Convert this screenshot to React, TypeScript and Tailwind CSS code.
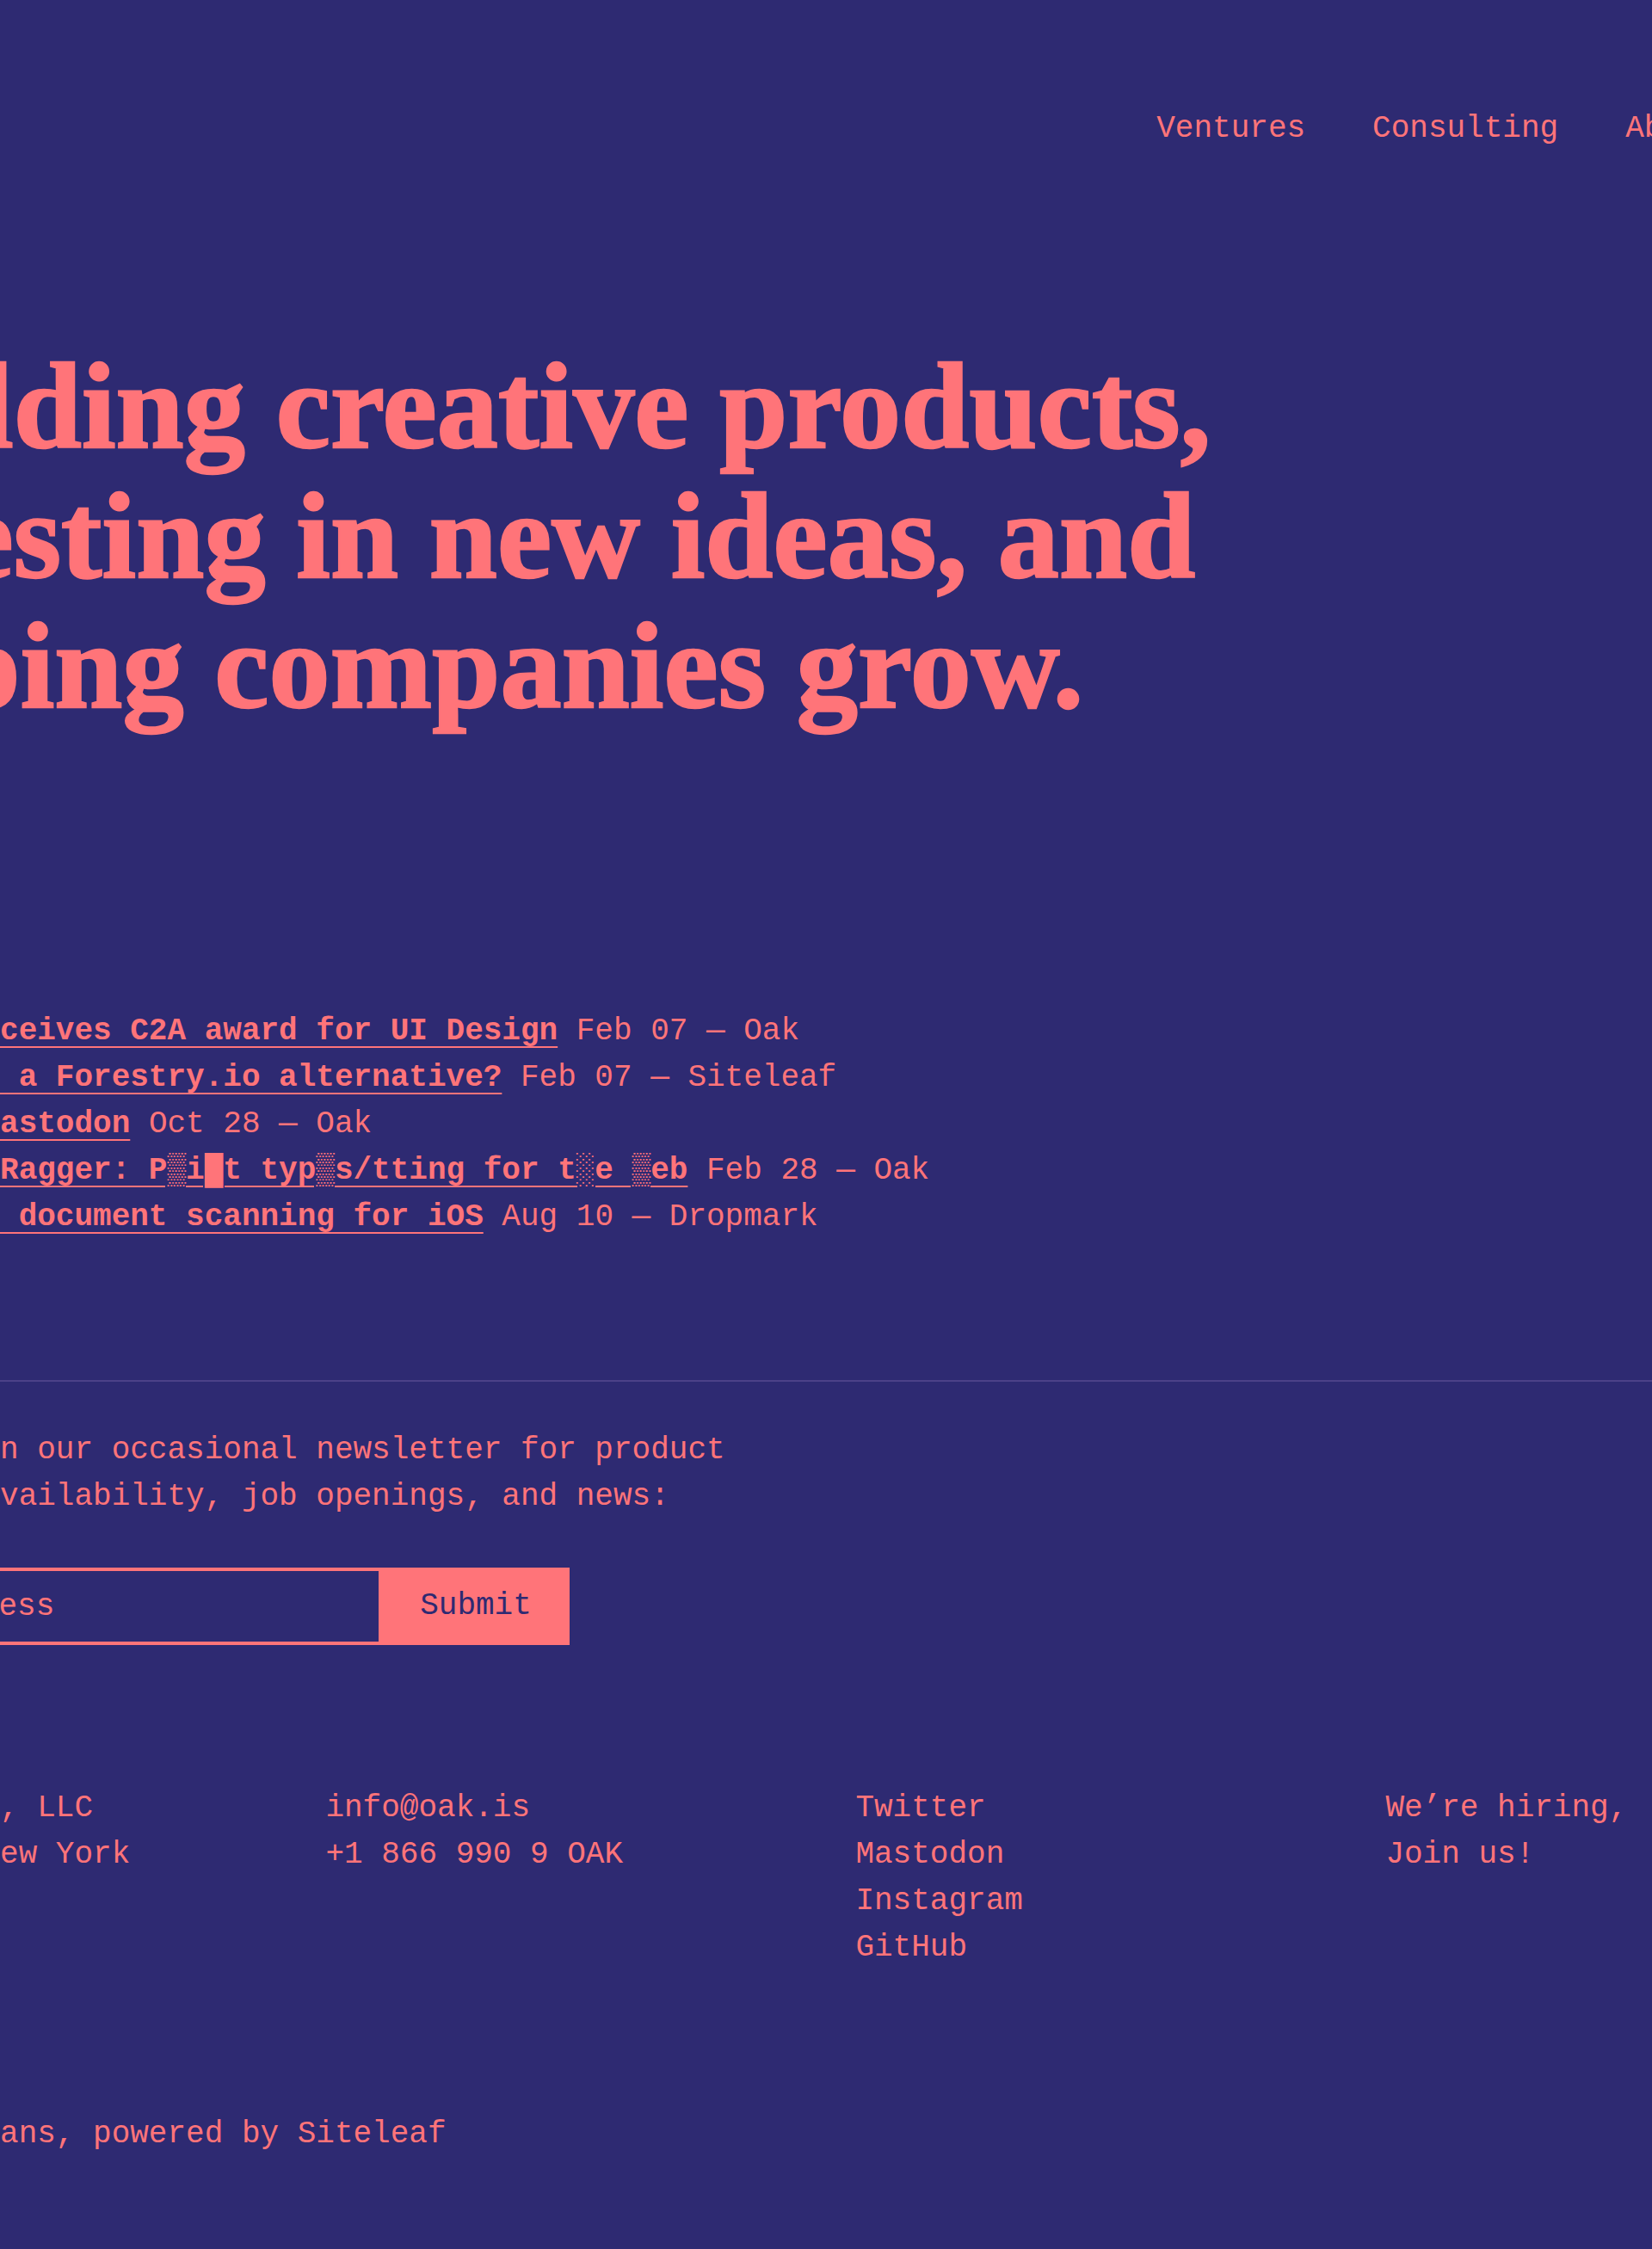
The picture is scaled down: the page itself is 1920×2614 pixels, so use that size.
import React from "react";

const news = [
    { title: "Dropmark receives C2A award for UI Design", meta: "Feb 07 — Oak" },
    { title: "Looking for a Forestry.io alternative?", meta: "Feb 07 — Siteleaf" },
    { title: "Oak is on Mastodon", meta: "Oct 28 — Oak" },
    { title: "Announcing Ragger: P▒i█t typ▒s/tting for t░e ▒eb", meta: "Feb 28 — Oak" },
    { title: "Introducing document scanning for iOS", meta: "Aug 10 — Dropmark" },
];

const footerCols = [
    ["Oak Studios, LLC", "Brooklyn, New York"],
    ["info@oak.is", "+1 866 990 9 OAK"],
    ["Twitter", "Mastodon", "Instagram", "GitHub"],
    ["We’re hiring,", "Join us!"],
];

const mono = "font-['Liberation_Mono',monospace] text-[36px] leading-[54px]";

export default function App() {
    return (
        <div className="w-full h-[2614px] overflow-hidden bg-[#2e2a72] text-[#ff7479]">
            <div className={`ml-[-237.6px] w-[2464px] ${mono}`}>
                {/* Header */}
                <header className="pt-[123px] flex items-center justify-between">
                    <a className="font-bold">Oak</a>
                    <nav className="flex gap-[78px]">
                        <a>Ventures</a>
                        <a>Consulting</a>
                        <a>About</a>
                        <a>Journal</a>
                    </nav>
                </header>

                {/* Hero */}
                <h1 className="mt-[220px] font-['Liberation_Serif',serif] font-bold text-[142px] leading-[151px] tracking-[0.2px] [-webkit-text-stroke:2.5px_#ff7479]">
                    Building creative products,
                    <br />
                    investing in new ideas, and
                    <br />
                    helping companies grow.
                </h1>

                {/* News */}
                <ul className="mt-[322px]">
                    {news.map((item) => (
                        <li key={item.title} className="whitespace-pre">
                            <a className="font-bold underline decoration-2 underline-offset-[8px]">{item.title}</a>{" "}
                            <span>{item.meta}</span>
                        </li>
                    ))}
                </ul>
            </div>

            {/* Divider */}
            <div className="mt-[162px] h-[2px] bg-[#4c4188]" />

            <div className={`ml-[-237.6px] w-[2464px] ${mono}`}>
                {/* Newsletter */}
                <p className="mt-[53px] whitespace-pre">
                    You can join our occasional newsletter for product
                    <br />
                    launches, availability, job openings, and news:
                </p>
                <form className="mt-[55px] flex h-[90px]">
                    <input
                        type="email"
                        placeholder="Email address"
                        className="w-[681.6px] h-full border-4 border-[#ff7479] bg-transparent pl-[16px] text-[#ff7479] placeholder:text-[#ff7479] outline-none"
                    />
                    <button
                        type="button"
                        className="w-[218px] h-full bg-[#ff7479] text-[#2e2a72]"
                    >
                        Submit
                    </button>
                </form>

                {/* Footer */}
                <footer className="mt-[163px] grid grid-cols-[616px_616px_616px_616px]">
                    {footerCols.map((col, i) => (
                        <div key={i} className="flex flex-col">
                            {col.map((line) => (
                                <a key={line}>{line}</a>
                            ))}
                        </div>
                    ))}
                </footer>
                <p className="mt-[163px]">Tiempos &amp; Sans, powered by Siteleaf</p>
            </div>
        </div>
    );
}
